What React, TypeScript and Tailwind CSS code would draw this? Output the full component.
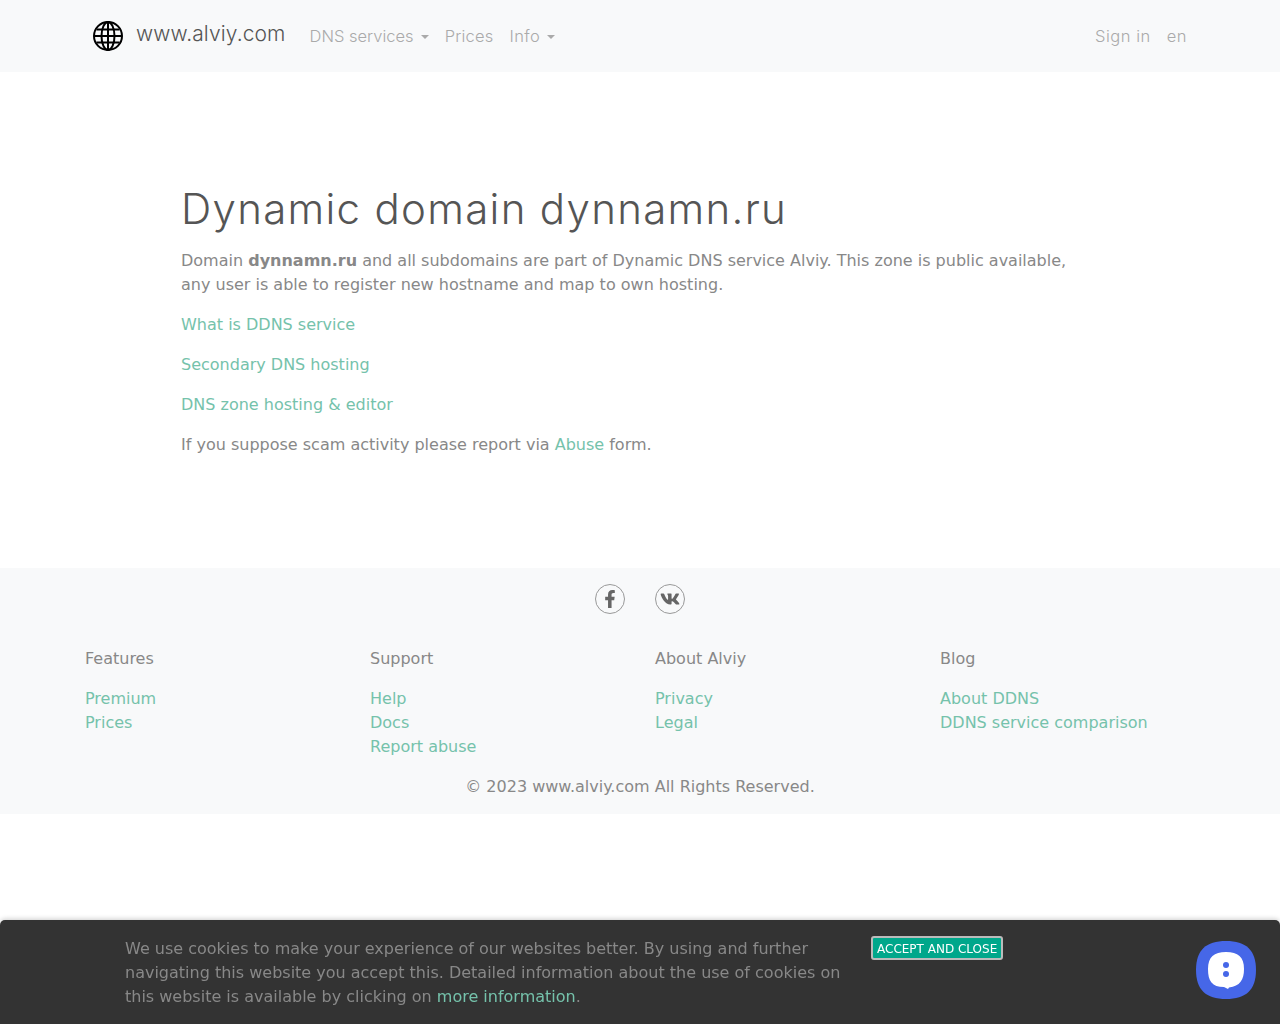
import { FaFacebookF, FaVk } from "react-icons/fa";

const dejavu = "font-['DejaVu_Sans',sans-serif]";
const brand = "font-['Inter',sans-serif]";

function GlobeIcon() {
    return (
        <svg width="32" height="32" viewBox="0 0 32 32" fill="none" stroke="#000" strokeWidth="2">
            <circle cx="16" cy="16" r="14" />
            <ellipse cx="16" cy="16" rx="6.5" ry="14" />
            <path d="M16 2v28M2 16h28M4.5 9.5h23M4.5 22.5h23" />
        </svg>
    );
}

function ChatIcon() {
    return (
        <svg width="60" height="58" viewBox="0 0 60 58">
            <path d="M30 0C50 0 60 9 60 29S50 58 30 58 0 49 0 29 10 0 30 0Z" fill="#4667e8" />
            <path d="M30 11C42 11 48 16 48 28C48 39 44 45 33 46.5L32 48L28 46C16 46 12 40 12 28C12 16 18 11 30 11Z" fill="#fff" />
            <circle cx="30" cy="24" r="3" fill="#4667e8" />
            <circle cx="30" cy="33" r="3" fill="#4667e8" />
        </svg>
    );
}

function Caret() {
    return <span className="ml-[7px] inline-block align-[3px] border-x-[4.8px] border-t-[4.8px] border-x-transparent border-t-current" />;
}

function FooterCol({ title, links }: { title: string; links: string[] }) {
    return (
        <div>
            <p className="mb-4">{title}</p>
            <ul>
                {links.map((link) => (
                    <li key={link}>
                        <a href="#" className="text-[#75c2ab]">{link}</a>
                    </li>
                ))}
            </ul>
        </div>
    );
}

export default function App() {
    return (
        <div className={`min-h-[1024px] bg-white text-base leading-6 text-[#888] antialiased ${dejavu}`}>
            {/* navbar */}
            <nav className="h-[72px] bg-[#f8f9fa]">
                <div className={`mx-auto flex h-full w-[1140px] items-center px-[22px] ${brand}`}>
                    <a href="#" className="flex items-center gap-3 text-[21px] font-light tracking-[0.12px] text-[#555]">
                        <GlobeIcon />
                        <span className="-mt-1">www.alviy.com</span>
                    </a>
                    <div className="ml-6 flex gap-4 text-[16.5px] font-light text-[#aaa]">
                        <a href="#">DNS services<Caret /></a>
                        <a href="#" className="tracking-[0.2px]">Prices</a>
                        <a href="#" className="tracking-[0.4px]">Info<Caret /></a>
                    </div>
                    <div className="ml-auto mr-px flex gap-4 text-[16.5px] font-light tracking-[0.5px] text-[#aaa]">
                        <a href="#">Sign in</a>
                        <a href="#">en</a>
                    </div>
                </div>
            </nav>

            {/* konten */}
            <main className="mx-auto h-[496px] w-[918px] pt-[112px]">
                <h1 className={`mb-[15px] text-[42px] font-light leading-[50px] tracking-[1.3px] text-[#555] ${brand}`}>Dynamic domain dynnamn.ru</h1>
                <p className="mb-4">
                    Domain <b>dynnamn.ru</b> and all subdomains are part of Dynamic DNS service Alviy. This zone is public available, any user is able to register new hostname and map to own hosting.
                </p>
                <p className="mb-4"><a href="#" className="text-[#75c2ab]">What is DDNS service</a></p>
                <p className="mb-4"><a href="#" className="text-[#75c2ab]">Secondary DNS hosting</a></p>
                <p className="mb-4"><a href="#" className="text-[#75c2ab]">DNS zone hosting &amp; editor</a></p>
                <p>If you suppose scam activity please report via <a href="#" className="text-[#75c2ab]">Abuse</a> form.</p>
            </main>

            {/* footer */}
            <footer className="h-[246px] bg-[#f8f9fa] pt-4">
                <div className="flex justify-center gap-[30px] text-[#666]">
                    <a href="#" className="flex size-[30px] items-center justify-center rounded-full border border-[#999]"><FaFacebookF size={18} /></a>
                    <a href="#" className="flex size-[30px] items-center justify-center rounded-full border border-[#999]"><FaVk size={20} /></a>
                </div>
                <div className="mx-auto mt-[33px] grid w-[1140px] grid-cols-[repeat(4,285px)] pl-[15px]">
                    <FooterCol title="Features" links={["Premium", "Prices"]} />
                    <FooterCol title="Support" links={["Help", "Docs", "Report abuse"]} />
                    <FooterCol title="About Alviy" links={["Privacy", "Legal"]} />
                    <FooterCol title="Blog" links={["About DDNS", "DDNS service comparison"]} />
                </div>
                <p className="mt-4 text-center">© 2023 www.alviy.com All Rights Reserved.</p>
            </footer>

            {/* cookie */}
            <div className="fixed inset-x-0 bottom-0 flex h-[104px] rounded-t-[5px] bg-[#333] pl-[125px] pt-4 text-[#888] shadow-[0_-1px_5px_rgba(0,0,0,0.2)]">
                <p className="mt-px w-[730px]">
                    We use cookies to make your experience of our websites better. By using and further navigating this website you accept this. Detailed information about the use of cookies on this website is available by clicking on <a href="#" className="text-[#75c2ab]">more information</a>.
                </p>
                <button type="button" className="ml-4 h-6 rounded-[3px] border-2 border-[#bbb] bg-[#00a78b] px-1 pt-px text-xs leading-4 text-white">
                    ACCEPT AND CLOSE
                </button>
            </div>
            <div className="fixed bottom-[25px] right-6 h-[58px]"><ChatIcon /></div>
        </div>
    );
}
